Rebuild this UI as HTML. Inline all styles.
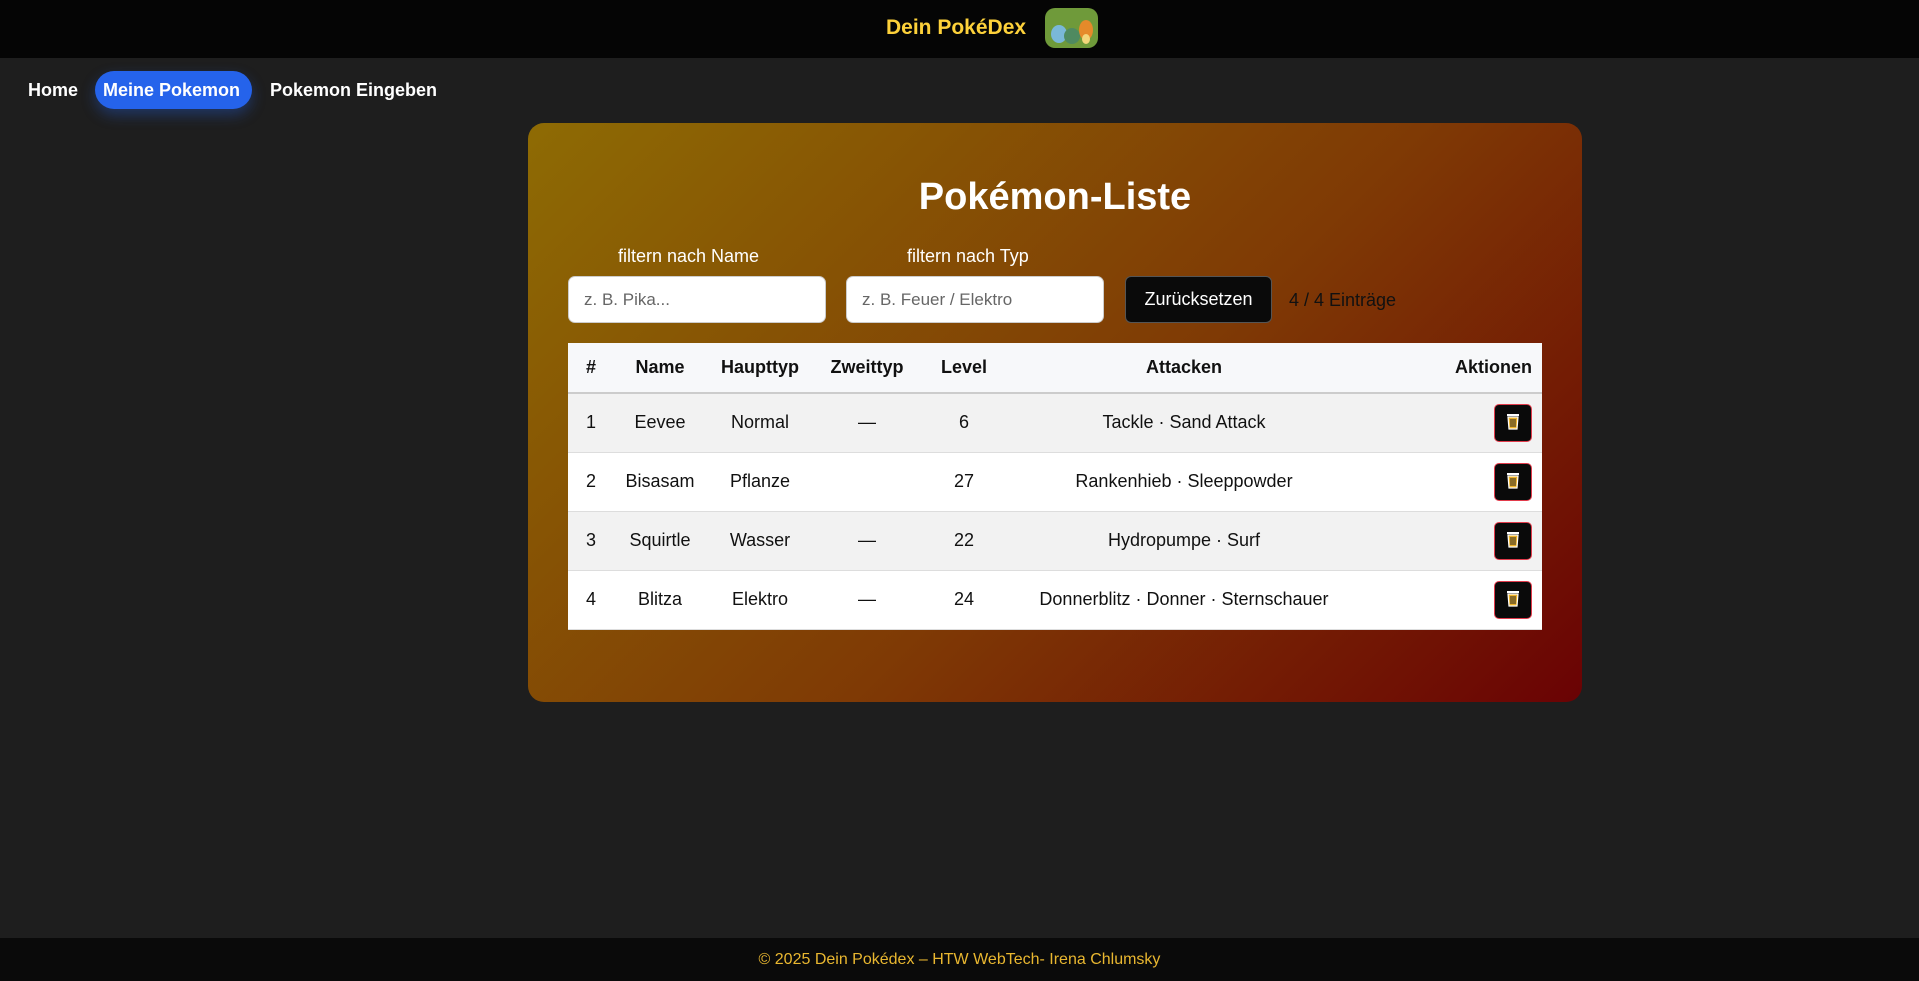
<!DOCTYPE html>
<html><head><meta charset="utf-8"><style>
*{box-sizing:border-box;margin:0;padding:0}
body{width:1919px;height:981px;background:#1e1e1e;font-family:"Liberation Sans",sans-serif;position:relative;overflow:hidden}
.hdr{position:absolute;left:0;top:0;width:1919px;height:58px;background:#050505}
.brand{position:absolute;left:886px;top:16px;font-weight:bold;font-size:21px;color:#fdd13a}
.logo{position:absolute;left:1045px;top:8px;width:53px;height:40px;border-radius:10px;background:#6f9a3a;overflow:hidden}
.nav a{position:absolute;top:71px;height:38px;line-height:38px;color:#fff;font-weight:bold;font-size:18px;text-decoration:none}
.pill{background:#2563eb;border-radius:19px;padding:0 12px 0 8px;box-shadow:0 6px 14px rgba(37,99,235,.35)}
.card{position:absolute;left:528px;top:123px;width:1054px;height:579px;border-radius:16px;background:linear-gradient(135deg,#8e6b04 0%,#7f3a05 55%,#6a0204 100%)}
h1{position:absolute;left:528px;width:1054px;top:176px;text-align:center;color:#fff;font-size:38px;font-weight:bold}
.lbl{position:absolute;top:246px;color:#fff;font-size:18px}
.inp{position:absolute;top:276px;width:258px;height:47px;background:#fff;border-radius:7px;border:1px solid #ccc;padding-left:15px;line-height:45px;color:#666;font-size:17px}
.btn{position:absolute;left:1125px;top:276px;width:147px;height:47px;background:#0a0a0a;border:1px solid #555;border-radius:6px;color:#fff;font-size:18px;text-align:center;line-height:45px}
.cnt{position:absolute;left:1289px;top:290px;color:#111;font-size:18px}
table{position:absolute;left:568px;top:343px;width:974px;border-collapse:collapse;font-size:18px;color:#111}
th{height:50px;background:#f7f8fa;font-weight:bold;border-bottom:2px solid #ccc}
td{height:59px;text-align:center;border-bottom:1px solid #ddd}
tr.g td{background:#f2f2f2}tr.w td{background:#fff}
.tb{display:inline-block;width:38px;height:38px;background:#0a0a0a;border:1px solid #e23b4b;border-radius:5px;vertical-align:middle;position:relative}
.foot{position:absolute;left:0;top:938px;width:1919px;height:43px;background:#0a0a0a;color:#e9b730;font-size:16px;text-align:center;line-height:43px}
</style></head><body>
<div class="hdr"><div class="brand">Dein PokéDex</div><div class="logo"><svg width="53" height="40"><ellipse cx="14" cy="26" rx="8" ry="9" fill="#7ab8d8"/><ellipse cx="27" cy="28" rx="8" ry="8" fill="#4f8a60"/><ellipse cx="41" cy="22" rx="7" ry="10" fill="#e58a2a"/><ellipse cx="41" cy="31" rx="4" ry="5" fill="#f3d67a"/></svg></div></div>
<div class="nav"><a style="left:28px">Home</a><a class="pill" style="left:95px">Meine Pokemon</a><a style="left:270px">Pokemon Eingeben</a></div>
<div class="card"></div>
<h1>Pokémon-Liste</h1>
<div class="lbl" style="left:618px">filtern nach Name</div>
<div class="lbl" style="left:907px">filtern nach Typ</div>
<div class="inp" style="left:568px">z. B. Pika...</div>
<div class="inp" style="left:846px">z. B. Feuer / Elektro</div>
<div class="btn">Zurücksetzen</div>
<div class="cnt">4 / 4 Einträge</div>
<table>
<colgroup><col style="width:46px"><col style="width:92px"><col style="width:108px"><col style="width:106px"><col style="width:88px"><col style="width:352px"><col></colgroup>
<tr><th>#</th><th>Name</th><th>Haupttyp</th><th>Zweittyp</th><th>Level</th><th>Attacken</th><th style="text-align:right;padding-right:10px">Aktionen</th></tr>
<tr class="g"><td>1</td><td>Eevee</td><td>Normal</td><td>—</td><td>6</td><td>Tackle · Sand Attack</td><td style="text-align:right;padding-right:10px"><span class="tb"><svg width="36" height="36"><rect x="12" y="9" width="12" height="2" fill="#fff"/><path d="M13 12h10l-1 12h-8z" fill="#f0b429" stroke="#fff" stroke-width="1.2"/><path d="M16 14v8M18 14v8M20 14v8" stroke="#222" stroke-width="1"/></svg></span></td></tr>
<tr class="w"><td>2</td><td>Bisasam</td><td>Pflanze</td><td></td><td>27</td><td>Rankenhieb · Sleeppowder</td><td style="text-align:right;padding-right:10px"><span class="tb"><svg width="36" height="36"><rect x="12" y="9" width="12" height="2" fill="#fff"/><path d="M13 12h10l-1 12h-8z" fill="#f0b429" stroke="#fff" stroke-width="1.2"/><path d="M16 14v8M18 14v8M20 14v8" stroke="#222" stroke-width="1"/></svg></span></td></tr>
<tr class="g"><td>3</td><td>Squirtle</td><td>Wasser</td><td>—</td><td>22</td><td>Hydropumpe · Surf</td><td style="text-align:right;padding-right:10px"><span class="tb"><svg width="36" height="36"><rect x="12" y="9" width="12" height="2" fill="#fff"/><path d="M13 12h10l-1 12h-8z" fill="#f0b429" stroke="#fff" stroke-width="1.2"/><path d="M16 14v8M18 14v8M20 14v8" stroke="#222" stroke-width="1"/></svg></span></td></tr>
<tr class="w"><td>4</td><td>Blitza</td><td>Elektro</td><td>—</td><td>24</td><td>Donnerblitz · Donner · Sternschauer</td><td style="text-align:right;padding-right:10px"><span class="tb"><svg width="36" height="36"><rect x="12" y="9" width="12" height="2" fill="#fff"/><path d="M13 12h10l-1 12h-8z" fill="#f0b429" stroke="#fff" stroke-width="1.2"/><path d="M16 14v8M18 14v8M20 14v8" stroke="#222" stroke-width="1"/></svg></span></td></tr>
</table>
<div class="foot">© 2025 Dein Pokédex – HTW WebTech- Irena Chlumsky</div>
</body></html>
